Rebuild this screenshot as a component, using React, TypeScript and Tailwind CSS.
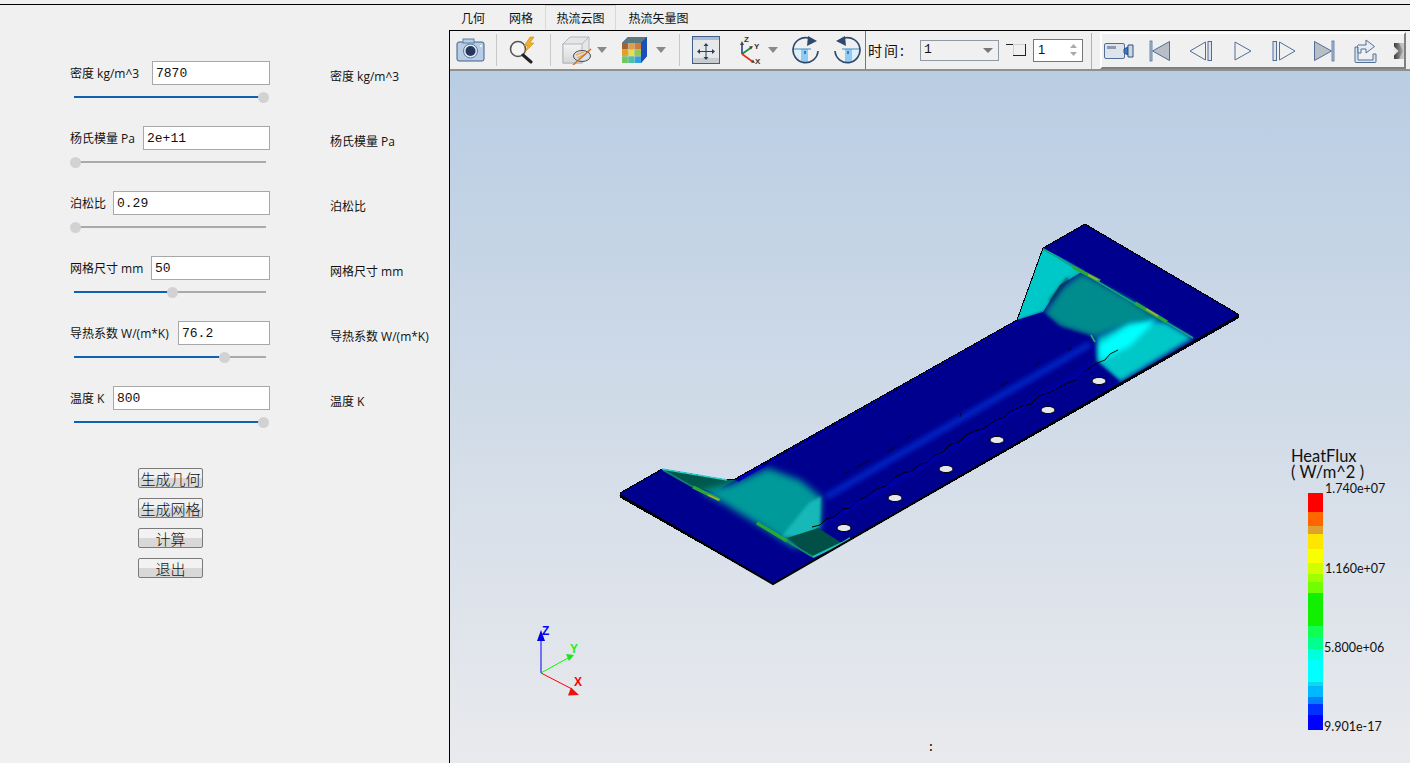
import React from 'react'

const params = [
  { label: '密度 kg/m^3', value: '7870', input: 'w-[118px]', pct: 98.5 },
  { label: '杨氏模量 Pa', value: '2e+11', input: 'w-[127px]', pct: 0.5 },
  { label: '泊松比', value: '0.29', input: 'w-[157px]', pct: 0.5 },
  { label: '网格尺寸 mm', value: '50', input: 'w-[119px]', pct: 51 },
  { label: '导热系数 W/(m*K)', value: '76.2', input: 'w-[92px]', pct: 78 },
  { label: '温度 K', value: '800', input: 'w-[157px]', pct: 98.5 },
]

const actions = ['生成几何', '生成网格', '计算', '退出']

const legend = [
  { h: 19, c: '#ff0000' }, { h: 14, c: '#ff6600' }, { h: 8, c: '#e0a030' }, { h: 15, c: '#ffe600' },
  { h: 14, c: '#f8ff00' }, { h: 11, c: '#d0ff00' }, { h: 8, c: '#a0ff00' }, { h: 11, c: '#70ff00' },
  { h: 33, c: '#10f000' }, { h: 11, c: '#10ff50' }, { h: 12, c: '#00ff90' }, { h: 11, c: '#00ffdc' },
  { h: 22, c: '#00ffff' }, { h: 4, c: '#10d8e8' }, { h: 11, c: '#00b8ff' }, { h: 7, c: '#0080ff' },
  { h: 11, c: '#0030ff' }, { h: 15, c: '#0000ff' },
]

const holes = [[844, 528], [895, 498], [946, 469], [997, 440], [1048, 410], [1099, 381]]

function Sep() {
  return <div className="w-px h-[32px] bg-[#c8c8c8]" />
}

function Caret() {
  return (
    <svg width="10" height="6" viewBox="0 0 10 6">
      <path d="M0 0h10L5 6z" fill="#8a8a8a" />
    </svg>
  )
}

function CameraIcon() {
  return (
    <svg width="30" height="26" viewBox="0 0 30 26">
      <rect x="1" y="5" width="27" height="19" rx="2" fill="#b8cce4" stroke="#3f5f8a" />
      <rect x="7" y="2" width="11" height="4" fill="#b8cce4" stroke="#5f7fa8" />
      <circle cx="14.5" cy="14" r="7" fill="#dfe8f2" stroke="#5a7aa0" />
      <circle cx="14.5" cy="14" r="5" fill="#23385c" />
      <circle cx="25" cy="9" r="1" fill="#fff" />
    </svg>
  )
}

function ZoomIcon() {
  return (
    <svg width="30" height="28" viewBox="0 0 30 28">
      <circle cx="10" cy="13" r="7.5" fill="#f4f4f4" stroke="#555" strokeWidth="1.6" />
      <path d="M15 19l8 7" stroke="#222" strokeWidth="3" strokeLinecap="round" />
      <path d="M22 1l-6 9h4l-3 6 9-9h-4l4-6z" fill="#f0b020" stroke="#c08010" strokeWidth=".5" />
    </svg>
  )
}

function BoxIcon() {
  return (
    <svg width="30" height="29" viewBox="0 0 30 29">
      <defs>
        <linearGradient id="boxFace" x1="0" y1="0" x2="0" y2="1">
          <stop offset="0" stopColor="#f4f4f4" />
          <stop offset="1" stopColor="#d4d6d8" />
        </linearGradient>
      </defs>
      <path d="M1 8l7-7h19v19l-7 7H1z" fill="#e4e6e8" stroke="#b4b8bc" />
      <rect x="1" y="8" width="19" height="19" fill="url(#boxFace)" stroke="#b4b8bc" />
      <path d="M20 8l7-7" stroke="#b4b8bc" />
      <ellipse cx="20" cy="20" rx="8.5" ry="5.5" fill="#d8e2ec" stroke="#4a4a4a" />
      <path d="M14 19l8-3M15 22l9-4" stroke="#e8b060" strokeWidth="1.4" />
      <path d="M11 29L29 13" stroke="#d07020" strokeWidth="1.5" />
    </svg>
  )
}

function CubeIcon() {
  return (
    <svg width="27" height="28" viewBox="0 0 27 28">
      <path d="M1 7l6-6h19v19l-6 7H1z" fill="#1d3f8c" />
      <rect x="1" y="7" width="6.3" height="6.6" fill="#a86030" />
      <rect x="7.3" y="7" width="6.3" height="6.6" fill="#e0a040" />
      <rect x="13.6" y="7" width="6.4" height="6.6" fill="#d07a40" />
      <rect x="1" y="13.6" width="6.3" height="6.7" fill="#e0a020" />
      <rect x="7.3" y="13.6" width="6.3" height="6.7" fill="#e8e040" />
      <rect x="13.6" y="13.6" width="6.4" height="6.7" fill="#90c850" />
      <rect x="1" y="20.3" width="6.3" height="6.7" fill="#70c860" />
      <rect x="7.3" y="20.3" width="6.3" height="6.7" fill="#40c8a0" />
      <rect x="13.6" y="20.3" width="6.4" height="6.7" fill="#30a0e0" />
      <path d="M7.3 7v20M13.6 7v20M1 13.6h19M1 20.3h19" stroke="#e8e8d8" strokeWidth=".5" />
      <path d="M1 7l6-6h19l-6 6z" fill="#5a7a80" />
      <path d="M20 7l6-6v19l-6 7z" fill="#1a50b8" />
    </svg>
  )
}

function MoveIcon() {
  return (
    <svg width="28" height="28" viewBox="0 0 28 28">
      <rect x=".5" y=".5" width="27" height="27" fill="#e6e8ea" stroke="#3f5f8a" />
      <rect x="1" y="1" width="26" height="3" fill="#a8bcd4" />
      <rect x="1" y="22" width="26" height="5" fill="#c8ccd0" />
      <path d="M14 8v15M6.5 15.5h15" stroke="#26405f" strokeWidth="1" />
      <path d="M14 7l-2.5 3h5zM14 24l-2.5-3h5zM5 15.5l3-2.5v5zM23 15.5l-3-2.5v5z" fill="#26405f" />
    </svg>
  )
}

function AxesIcon() {
  return (
    <svg width="24" height="30" viewBox="0 0 24 30">
      <path d="M5 19V8" stroke="#2040a0" strokeWidth="1.6" />
      <path d="M5 19l10-7" stroke="#109030" strokeWidth="1.6" />
      <path d="M5 19l11 8" stroke="#e03020" strokeWidth="1.6" />
      <path d="M5 6l-2 4h4zM16 11l-4 .5 2 3zM18 28l-4-.5 2-3z" fill="#444" />
      <text x="7" y="7" fontSize="8" fontFamily="Liberation Sans" fontWeight="700" fill="#333">Z</text>
      <text x="17" y="14" fontSize="8" fontFamily="Liberation Sans" fontWeight="700" fill="#333">Y</text>
      <text x="18" y="29" fontSize="8" fontFamily="Liberation Sans" fontWeight="700" fill="#333">X</text>
    </svg>
  )
}

function RotateIcon({ flip }: { flip?: boolean }) {
  return (
    <svg width="28" height="28" viewBox="0 0 28 28" className={flip ? '-scale-x-100' : ''}>
      <path d="M1.5 13H14V26.5A12.5 12.5 0 0 1 1.5 14z" fill="#e0f0fa" />
      <rect x="9" y="13" width="7" height="13" fill="#90ccf2" />
      <rect x="12" y="15" width="2" height="3" fill="#3080d0" />
      <path d="M1.5 13H19" stroke="#3a8ac8" strokeWidth="1" />
      <path d="M26 15A12.5 12.5 0 1 1 16.5 2" fill="none" stroke="#2f4a6e" strokeWidth="1.7" />
      <path d="M16 0l9 5-10 5z" fill="#2f4a6e" />
    </svg>
  )
}

function StepIcon() {
  return (
    <svg width="21" height="14" viewBox="0 0 21 14">
      <path d="M7.5 1.5h12M7.5 1.5v11" fill="none" stroke="#d0d0d0" strokeWidth="1" />
      <path d="M0 1.5h7M7 12.5h13M19.5 1v12" fill="none" stroke="#222" strokeWidth="1" />
    </svg>
  )
}

function FilmIcon() {
  return (
    <svg width="30" height="18" viewBox="0 0 30 18">
      <rect x=".5" y="1.5" width="20" height="15" rx="1.5" fill="#dde4ec" stroke="#4f6f98" />
      <rect x="3" y="4" width="9" height="3" fill="#8a9ab0" />
      <path d="M20 7l4-2v8l-4-2z" fill="#3a7ac0" stroke="#30527e" />
      <path d="M24 3h5v12h-5z" fill="#c8d8e8" stroke="#30527e" />
    </svg>
  )
}

const navStroke = '#4f6f98'

function FirstIcon() {
  return (
    <svg width="22" height="22" viewBox="0 0 22 22">
      <rect x="1" y="1" width="2" height="20" fill="#b8c4d4" stroke={navStroke} strokeWidth=".8" />
      <path d="M20.5 1.5v19L3.5 11z" fill="#b8bec6" stroke={navStroke} />
    </svg>
  )
}

function PrevIcon() {
  return (
    <svg width="24" height="22" viewBox="0 0 24 22">
      <path d="M16.5 2v18L1 11z" fill="#f0f0f0" stroke={navStroke} />
      <rect x="19" y="1.5" width="3.5" height="19" fill="#e0e4ea" stroke={navStroke} />
    </svg>
  )
}

function PlayIcon() {
  return (
    <svg width="18" height="22" viewBox="0 0 18 22">
      <path d="M1 2v18l16-9z" fill="#f0f0f0" stroke={navStroke} />
    </svg>
  )
}

function NextIcon() {
  return (
    <svg width="24" height="22" viewBox="0 0 24 22">
      <rect x="1" y="1.5" width="3.5" height="19" fill="#e0e4ea" stroke={navStroke} />
      <path d="M7.5 2v18L23 11z" fill="#f0f0f0" stroke={navStroke} />
    </svg>
  )
}

function LastIcon() {
  return (
    <svg width="22" height="22" viewBox="0 0 22 22">
      <path d="M1.5 1.5v19l17-9.5z" fill="#b8bec6" stroke={navStroke} />
      <rect x="19" y="1" width="2" height="20" fill="#b8c4d4" stroke={navStroke} strokeWidth=".8" />
    </svg>
  )
}

function ExportIcon() {
  return (
    <svg width="24" height="24" viewBox="0 0 24 24">
      <path d="M2 8H5V21H20V15H23V22.5A1 1 0 0 1 22 23.5H3A1 1 0 0 1 2 22.5z" fill="#dbe4ee" stroke={navStroke} />
      <path d="M5 8V14H8V10H13V14L21.5 7.5L13 1V6H6A1 1 0 0 0 5 8z" fill="#e8edf3" stroke={navStroke} />
    </svg>
  )
}

function MoreIcon() {
  return (
    <svg width="10" height="18" viewBox="0 0 10 18">
      <defs>
        <linearGradient id="moreFade" x1="0" y1="0" x2="1" y2="0">
          <stop offset="0" stopColor="#3c3c3c" />
          <stop offset="1" stopColor="#b8b8b8" />
        </linearGradient>
      </defs>
      <rect x="0" y="1" width="10" height="16" fill="url(#moreFade)" />
      <path d="M0 4.5L4.5 9L0 13.5z" fill="#e8e8e8" />
      <path d="M5 1h5v16H5L9 9z" fill="#cfcfcf" opacity=".7" />
    </svg>
  )
}

function Model() {
  const body = '620,493 662,469 727,480 735,479 1017,320 1043,248 1085,224 1238,314 1238,318 773,584 620,497'
  const crackA =
    '812,527 820,525 826,519 834,517 843,509 850,508 858,500 866,497 876,489 886,486 894,478 903,473 912,471 920,464 927,463 935,455 943,452 951,444 958,443 966,435 975,431 983,429 990,424 996,420 1004,417 1011,411 1022,406 1031,404 1039,396 1048,393 1058,388 1067,383 1076,380 1085,371 1095,364 1105,360 1110,354 1118,350'
  return (
    <svg className="block w-full h-full" viewBox="450 71 960 692">
      <defs>
        <clipPath id="bodyClip">
          <polygon points={body} />
        </clipPath>
        <filter id="soft" x="-30%" y="-30%" width="160%" height="160%">
          <feGaussianBlur stdDeviation="3.5" />
        </filter>
        <filter id="mid" x="-30%" y="-30%" width="160%" height="160%">
          <feGaussianBlur stdDeviation="2.5" />
        </filter>
        <filter id="softer" x="-30%" y="-30%" width="160%" height="160%">
          <feGaussianBlur stdDeviation="1.8" />
        </filter>
      </defs>
      <polygon points={body} fill="#00008f" />
      <g clipPath="url(#bodyClip)">
        {/* right section */}
        <polygon points="1043,248 1017,320 1043,312 1060,285 1085,270" fill="#00c8c8" />
        <polygon points="1043,314 1062,287 1082,272 1130,298 1165,322 1130,325 1095,338 1060,327" fill="#008c8c" filter="url(#soft)" />
        <polygon points="1097,338 1130,322 1165,322 1193,338 1120,382 1097,362" fill="#00c8c8" filter="url(#mid)" />
        <polygon points="1099,345 1128,326 1157,319 1130,346 1100,361" fill="#00ffff" filter="url(#mid)" />
        <polygon points="1097,362 1120,382 1100,392 1085,375" fill="#00008f" filter="url(#softer)" />

        {/* upper right flange, soft edge on the teal */}
        <polygon points="1043,246 1085,222 1240,314 1196,338 1170,322 1135,300 1100,282 1072,264" fill="#00008f" filter="url(#softer)" />
        <path d="M1043 249L1193 338" stroke="#10a878" strokeWidth="1.5" />
        <path d="M1073 267L1100 281M1135 303L1167 322" stroke="#28a838" strokeWidth="3.5" />
        <path d="M1088 275L1098 280M1146 309L1158 316" stroke="#b0a840" strokeWidth="1.5" />
        <path d="M1068 278C1063 284 1058 292 1050 301" stroke="#004050" strokeWidth="2.5" filter="url(#softer)" fill="none" />

        {/* channel, fades into the teal at both ends */}
        <polygon points="1017,321 1043,312 1060,327 1090,336 1095,363 1040,420 850,525 821,497" fill="#00008f" filter="url(#softer)" />
        <path d="M821 526L1095 364" stroke="#0000a8" strokeWidth="4" filter="url(#softer)" />
        <path d="M826 497L1090 344" stroke="#0028c8" strokeWidth="6" filter="url(#mid)" />
        <path d="M1094 338V362" stroke="#00a0a0" strokeWidth="1.5" filter="url(#softer)" opacity=".8" />
        <path d="M1091 335L1095 342" stroke="#30c060" strokeWidth="1.5" />

        {/* left flange fold */}
        <polygon points="662,469 727,480 735,480 715,492 696,488" fill="#00584c" />
        <polygon points="732,484 768,468 800,480 821,497 820,530 795,548 757,524 723,503 700,491" fill="#009a9a" filter="url(#soft)" />
        <polygon points="808,504 821,496 820,526 806,536 782,536 795,520" fill="#18b8b8" filter="url(#softer)" />
        <polygon points="818,528 842,543 813,557 787,538" fill="#005048" />
        <path d="M663 470L693 487" stroke="#108868" strokeWidth="1.5" />
        <path d="M757 523L813 557" stroke="#109060" strokeWidth="2" />
        <path d="M693 487L720 500M757 523L787 541" stroke="#28a838" strokeWidth="3.5" />
        <path d="M708 495L719 500" stroke="#b0a840" strokeWidth="1.5" />
        <path d="M813 557L842 543L850 538" stroke="#20c0b0" strokeWidth="2" />

        {/* thin blue strip under the back edge */}
        <polygon points="735,479 1017,320 1020,323 738,482" fill="#0000b0" />
      </g>

      {/* outline */}
      <polygon points={body} fill="none" stroke="#000" strokeWidth="1" shapeRendering="crispEdges" />
      <path d="M620 495L773 584L1238 316" fill="none" stroke="#000" strokeWidth="2" />
      <path d="M662 469L727 480" stroke="#30d0d0" strokeWidth="1.5" />
      <path d="M763 465L1012 326" stroke="#000" strokeWidth=".8" fill="none" />
      <polyline points={crackA} fill="none" stroke="#000" strokeWidth="1" />
      <path d="M843 474L850 471M855 468L870 460M888 452L896 446M905 440L912 435M960 417L961 413M1000 386L1008 382M1034 366L1040 362M1068 350L1072 348" stroke="#000" strokeWidth=".8" />
      {holes.map(([cx, cy]) => (
        <ellipse key={cx} cx={cx} cy={cy} rx="7" ry="3.6" fill="#e4e8ee" stroke="#000" strokeWidth="1" />
      ))}

      {/* axis triad */}
      <path d="M541 673V640" stroke="#0000ff" strokeWidth="1" />
      <path d="M541 673L568 658" stroke="#00ff00" strokeWidth="1" />
      <path d="M541 673L572 689" stroke="#ff0000" strokeWidth="1" />
      <path d="M541 630l-4 11h8z" fill="#0000e0" />
      <path d="M574 655l-8-1 3 7z" fill="#20e020" />
      <path d="M579 695l-11 .5 3-8z" fill="#f01010" />
      <text x="542" y="635" fontSize="12" fontWeight="700" fontFamily="Liberation Sans" fill="#0000ff">Z</text>
      <text x="570" y="653" fontSize="12" fontWeight="700" fontFamily="Liberation Sans" fill="#20f020">Y</text>
      <text x="574" y="686" fontSize="12" fontWeight="700" fontFamily="Liberation Sans" fill="#ff0000">X</text>
    </svg>
  )
}

export default function App() {
  return (
    <div className="w-[1410px] h-[763px] overflow-hidden flex flex-col bg-[#f0f0f0] text-[#111] font-['Open_Sans','Noto_Sans_CJK_SC',sans-serif] text-[12px]">
      <div className="h-[4px]" />
      <div className="h-px bg-black" />
      <div className="flex flex-1 min-h-0">
        {/* Parameter form */}
        <aside className="w-[449px] shrink-0 pt-[56px]">
          {params.map((p) => (
            <div key={p.label} className="h-[65px] flex">
              <div className="ml-[70px] w-[200px]">
                <div className="flex items-center justify-between h-[24px]">
                  <span className="whitespace-nowrap pt-[2px]">{p.label}</span>
                  <div className={`${p.input} h-[24px] bg-white border border-[#a8a8a8] pl-[3px] pt-[2px] flex items-center font-['Liberation_Mono',monospace] text-[13px]`}>
                    {p.value}
                  </div>
                </div>
                <div className="relative ml-[4px] w-[192px] h-[2px] mt-[11px] bg-[#aaaaaa]">
                  <div className="h-full bg-[#0f62b0]" style={{ width: `${p.pct}%` }} />
                  <div
                    className="absolute top-[-4px] -ml-[5px] w-[11px] h-[11px] rounded-full bg-[#d2d2d2]"
                    style={{ left: `${p.pct}%` }}
                  />
                </div>
              </div>
              <span className="ml-[60px] mt-[7px] h-[18px] leading-[18px] whitespace-nowrap">{p.label}</span>
            </div>
          ))}
          <div className="flex flex-col items-center gap-[10px] w-[65px] ml-[138px] mt-[17px]">
            {actions.map((a) => (
              <button
                key={a}
                className="w-[65px] h-[20px] flex items-center justify-center rounded-[2px] border border-[#7a7a7a] bg-linear-to-b from-[#f2f2f2] from-50% to-[#d8d8d8] to-50% text-[15px] leading-none font-['Noto_Sans_CJK_SC',sans-serif] font-light"
              >
                {a}
              </button>
            ))}
          </div>
        </aside>

        <main className="flex-1 min-w-0 flex flex-col">
          {/* Tabs */}
          <div className="h-[25px] flex items-end font-['Noto_Sans_CJK_SC',sans-serif]">
            <div className="h-[24px] w-[48px] flex items-center justify-center">几何</div>
            <div className="h-[24px] w-[48px] flex items-center justify-center">网格</div>
            <div className="h-[25px] w-[71px] flex items-center justify-center border border-b-0 border-[#d8d8d8]">热流云图</div>
            <div className="h-[24px] w-[85px] flex items-center justify-center">热流矢量图</div>
          </div>
          <div className="flex-1 min-h-0 flex flex-col border-t border-l border-black">
            {/* Toolbar */}
            <div className="h-[40px] shrink-0 flex items-center border-b-2 border-[#909090] pl-[6px]">
              <div className="w-[30px] flex justify-center"><CameraIcon /></div>
              <div className="ml-[10px]"><Sep /></div>
              <div className="ml-[11px]"><ZoomIcon /></div>
              <div className="ml-[12px]"><Sep /></div>
              <div className="ml-[11px]"><BoxIcon /></div>
              <div className="ml-[5px]"><Caret /></div>
              <div className="ml-[14px]"><CubeIcon /></div>
              <div className="ml-[8px]"><Caret /></div>
              <div className="ml-[13px]"><Sep /></div>
              <div className="ml-[12px]"><MoveIcon /></div>
              <div className="ml-[17px]"><AxesIcon /></div>
              <div className="ml-[7px]"><Caret /></div>
              <div className="ml-[14px]"><RotateIcon /></div>
              <div className="ml-[13px]"><RotateIcon flip /></div>
              <div className="ml-[4px] w-px h-[38px] bg-[#777] self-end" />
              <span className="ml-[2px] w-[52px] text-[14px] font-['Noto_Sans_CJK_SC',sans-serif] tracking-[2px]">时间:</span>
              <div className="w-[79px] h-[21px] flex items-center justify-between border border-[#8f9aa6] px-[3px] font-['Liberation_Mono',monospace] text-[13px]">
                1
                <svg width="10" height="5" viewBox="0 0 10 5" className="mr-[2px]"><path d="M0 0h10L5 5z" fill="#777" /></svg>
              </div>
              <div className="ml-[7px]"><StepIcon /></div>
              <div className="ml-[6px] w-[50px] h-[23px] flex items-center justify-between border border-[#777] bg-white pl-[4px] pr-[5px] font-['Liberation_Sans',sans-serif] text-[13px]">
                1
                <svg width="7" height="14" viewBox="0 0 7 14"><path d="M3.5 1L7 5H0zM3.5 13L7 9H0z" fill="#aaa" /></svg>
              </div>
              <div className="ml-[8px] w-px h-[36px] bg-[#b0b0b0] self-end" />
              <div className="ml-[8px] w-[306px] h-[37px] self-end flex items-center border-2 border-white border-b-[#808080] border-r-[#808080]">
                <div className="ml-[2px]"><FilmIcon /></div>
                <div className="ml-[15px]"><FirstIcon /></div>
                <div className="ml-[18px]"><PrevIcon /></div>
                <div className="ml-[21px]"><PlayIcon /></div>
                <div className="ml-[20px]"><NextIcon /></div>
                <div className="ml-[17px]"><LastIcon /></div>
                <div className="ml-[18px]"><ExportIcon /></div>
                <div className="ml-[17px]"><MoreIcon /></div>
              </div>
            </div>
            {/* 3D viewport */}
            <div className="relative flex-1 min-h-0 bg-linear-to-b from-[#b9cde3] to-[#e9eaed]">
              <Model />
              <div className="absolute left-[841px] top-[377px] w-[80px] text-[#111] font-['Lato',sans-serif] text-[16.5px] leading-[16px] whitespace-pre">
                {'HeatFlux\n( W/m^2 )'}
              </div>
              <div className="absolute left-[858px] top-[422px] w-[15px] flex flex-col">
                {legend.map((s) => (
                  <div key={s.c} style={{ height: s.h, backgroundColor: s.c }} />
                ))}
              </div>
              <span className="absolute left-[875px] top-[410px] font-['Lato',sans-serif] text-[12.5px] leading-[16px]">1.740e+07</span>
              <span className="absolute left-[875px] top-[490px] font-['Lato',sans-serif] text-[12.5px] leading-[16px]">1.160e+07</span>
              <span className="absolute left-[874px] top-[569px] font-['Lato',sans-serif] text-[12.5px] leading-[16px]">5.800e+06</span>
              <span className="absolute left-[874px] top-[648px] font-['Lato',sans-serif] text-[12.5px] leading-[16px]">9.901e-17</span>
              <span className="absolute left-[477px] top-[669px] font-['Liberation_Mono',monospace] text-[13px] leading-[16px]">:</span>
            </div>
          </div>
        </main>
      </div>
    </div>
  )
}
